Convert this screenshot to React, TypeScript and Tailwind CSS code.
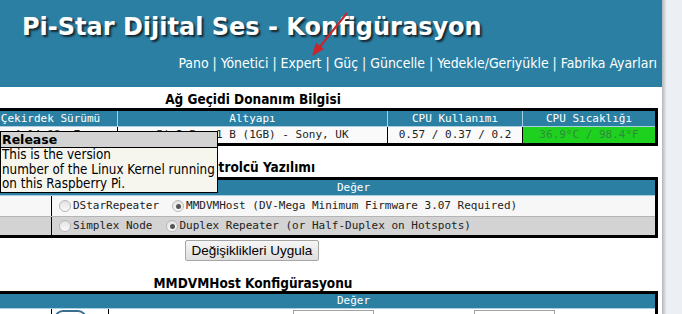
const sans = "font-['DejaVu_Sans',Verdana,sans-serif]";
const mono = "font-['DejaVu_Sans_Mono','Liberation_Mono',monospace]";

function Radio({ checked }: { checked?: boolean }) {
  return (
    <span className="flex h-[12px] w-[12px] shrink-0 items-center justify-center rounded-full border border-[#b8b8b8] bg-gradient-to-b from-[#e2e2e2] to-[#fbfbfb]">
      {checked && <span className="h-[5px] w-[5px] rounded-full bg-[#555]" />}
    </span>
  );
}

export default function App() {
  return (
    <div className="flex h-[314px] w-[682px] overflow-hidden bg-[#eceff3]">
      <div className="relative w-[662px] shrink-0 bg-white">
        <header className="relative h-[87px] bg-[#2b7fa3]">
          <h1
            className={`${sans} pl-[22px] pt-[12px] text-[24px] font-bold leading-[30px] text-white [text-shadow:2px_2px_2px_#16262e]`}
          >
            Pi-Star Dijital Ses - Konfigürasyon
          </h1>
          <nav
            className={`${sans} absolute right-[5px] top-[54px] text-[13.9px] leading-[18px] text-white font-stretch-condensed`}
          >
            Pano | Yönetici | Expert | Güç | Güncelle | Yedekle/Geriyükle | Fabrika Ayarları
          </nav>
          <svg className="absolute left-[308px] top-[10px]" width="44" height="50" viewBox="0 0 44 50">
            <line x1="39" y1="3" x2="10" y2="39" stroke="#c9252b" strokeWidth="2" />
            <polygon points="4,46 8,33 16,39" fill="#c9252b" />
          </svg>
        </header>

        <main className="relative">
          <h2 className={`${sans} h-[21px] w-[506px] pt-[5px] text-center text-[13.5px] font-bold leading-[15px] text-black font-stretch-condensed`}>
            Ağ Geçidi Donanım Bilgisi
          </h2>
          <div className={`${mono} w-[658px] border-y-[3px] border-r-[3px] border-black text-[11px]`}>
            <div className="grid h-[16px] grid-cols-[117px_270px_135px_1fr] border-b border-[#a9d0e2] bg-[#2b7fa3] leading-[15px] text-white">
              <div className="pr-[16px] text-center">Çekirdek Sürümü</div>
              <div className="border-l border-[#a9d0e2] text-center">Altyapı</div>
              <div className="border-l border-[#a9d0e2] text-center">CPU Kullanımı</div>
              <div className="border-l border-[#a9d0e2] text-center">CPU Sıcaklığı</div>
            </div>
            <div className="grid h-[16px] grid-cols-[117px_270px_135px_1fr] bg-[#fafafa] leading-[16px] text-[#222]">
              <div className="pr-[16px] text-center">4.14.98-v7+</div>
              <div className="border-l border-black text-center">Pi 3 Rev 1 B (1GB) - Sony, UK</div>
              <div className="border-l border-black text-center">0.57 / 0.37 / 0.2</div>
              <div className="border-l border-black bg-[#1fd11f] text-center text-[#2e8a3c]">36.9°C / 98.4°F</div>
            </div>
          </div>

          <h2 className={`${sans} h-[31px] w-[466px] pt-[14px] text-center text-[13.5px] font-bold leading-[15px] text-black font-stretch-condensed`}>
            Telsiz Kontrolcü Yazılımı
          </h2>
          <div className={`${mono} w-[658px] border-y-[3px] border-r-[3px] border-black text-[11px] text-[#222]`}>
            <div className="grid h-[15px] grid-cols-[52px_1fr] bg-[#2b7fa3] leading-[15px] text-white">
              <div />
              <div className="text-center">Değer</div>
            </div>
            <div className="grid h-[21px] grid-cols-[52px_1fr] border-t border-[#a9d0e2] bg-[#f7f7f7]">
              <div className="border-r border-black" />
              <div className="flex items-center pl-[7px]">
                <Radio />
                <span className="ml-[2px]">DStarRepeater</span>
                <span className="ml-[13px]"><Radio checked /></span>
                <span className="ml-[2px]">MMDVMHost (DV-Mega Minimum Firmware 3.07 Required)</span>
              </div>
            </div>
            <div className="grid h-[19px] grid-cols-[52px_1fr] border-t border-[#b5b5b5] bg-[#d3d3d3]">
              <div className="border-r border-black" />
              <div className="flex items-center pl-[7px]">
                <Radio />
                <span className="ml-[2px]">Simplex Node</span>
                <span className="ml-[14px]"><Radio checked /></span>
                <span className="ml-[1px]">Duplex Repeater (or Half-Duplex on Hotspots)</span>
              </div>
            </div>
          </div>

          <div className="mt-[2px] flex w-[504px] justify-center">
            <button className="h-[21px] rounded-[2px] border border-[#a6a6a6] bg-gradient-to-b from-[#f6f6f6] to-[#dedede] px-[6px] font-['Liberation_Sans',Arial,sans-serif] text-[13.5px] leading-[19px] text-black">
              Değişiklikleri Uygula
            </button>
          </div>

          <h2 className={`${sans} mt-[15px] h-[14px] w-[506px] text-center text-[13.5px] font-bold leading-[14px] text-black font-stretch-condensed`}>
            MMDVMHost Konfigürasyonu
          </h2>
          <div className={`${mono} mt-[1px] w-[658px] border-t-[3px] border-r-[3px] border-black text-[11px]`}>
            <div className="grid h-[14px] grid-cols-[52px_1fr] bg-[#2b7fa3] leading-[14px] text-white">
              <div />
              <div className="text-center">Değer</div>
            </div>
            <div className="grid h-[24px] grid-cols-[52px_57px_1fr] border-t border-[#a9d0e2] bg-white">
              <div className="border-r border-black" />
              <div className="border-r border-black pl-[2px] pt-[1px]">
                <div className="flex h-[18px] w-[33px] items-center justify-center rounded-full border-2 border-[#3a6f8f]">
                  <div className="h-[8px] w-[8px] rounded-full bg-[#3a6f8f]" />
                </div>
              </div>
              <div className="flex pl-[184px] pt-[1px]">
                <div className="h-[20px] w-[81px] border border-[#a0a0a0] bg-white" />
                <div className="ml-[100px] h-[20px] w-[81px] border border-[#a0a0a0] bg-white" />
              </div>
            </div>
          </div>

          <div className="absolute left-0 top-[44px] w-[218px] border border-black bg-[#f6f6ef] text-black">
            <div className={`${sans} border-b border-black bg-[#d3d3d3] pl-[1px] text-[12.5px] font-bold leading-[15px]`}>
              Release
            </div>
            <div className={`${sans} pl-[1px] text-[13.3px] leading-[14.5px] font-stretch-condensed`}>
              This is the version
              <br />
              number of the Linux Kernel running
              <br />
              on this Raspberry Pi.
            </div>
          </div>
        </main>
      </div>
      <div className="w-[4px] shrink-0 bg-gradient-to-r from-[#b4b7bb] to-[#e2e5e9]" />
    </div>
  );
}
